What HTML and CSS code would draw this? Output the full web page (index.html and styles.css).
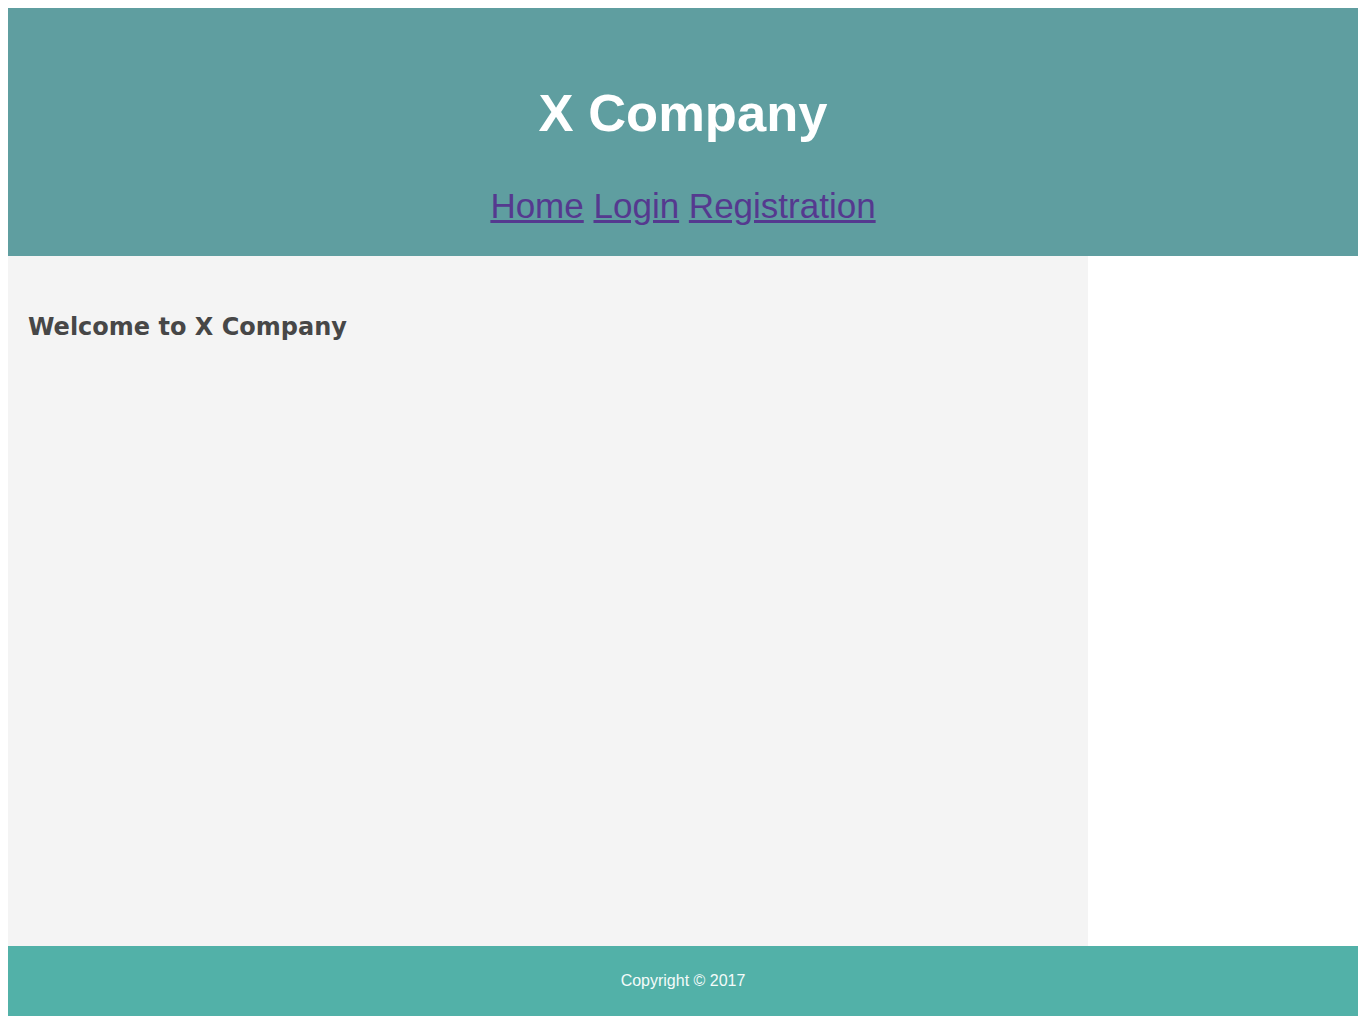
FILE: index.html
```html
<!DOCTYPE html>
<html lang="en">
<head>
<meta charset="utf-8">
<title>X Company</title>
<link rel="stylesheet" href="styles.css">
</head>
<body>
<header class="site-header">
  <h1 class="site-title">X Company</h1>
  <nav class="site-nav">
    <a href="#">Home</a> <a href="#">Login</a> <a href="#">Registration</a>
  </nav>
</header>
<div class="page">
  <main class="content">
    <h2 class="welcome">Welcome to X Company</h2>
  </main>
  <aside class="sidebar"></aside>
</div>
<footer class="site-footer">Copyright &copy; 2017</footer>
</body>
</html>
```

FILE: styles.css
```css
html, body {
  background: #ffffff;
}
body {
  margin: 8px;
  font-family: "Liberation Sans", Arial, sans-serif;
}
.site-header {
  background: #5f9ea0;
  padding: 75px 0 30px;
  text-align: center;
}
.site-title {
  margin: 0;
  font-size: 52.5px;
  line-height: 60px;
  font-weight: bold;
  color: #ffffff;
}
.site-nav {
  margin-top: 43px;
  font-size: 35px;
  line-height: 40px;
}
.site-nav a {
  color: #55398f;
  text-decoration: underline;
}
.page {
  display: flex;
  height: 690px;
}
.content {
  width: 80%;
  background: #f4f4f4;
  padding: 0 20px;
  box-sizing: border-box;
}
.sidebar {
  flex: 1;
  background: #ffffff;
}
.welcome {
  margin: 56px 0 0;
  font-family: "Comic Sans MS", "DejaVu Sans", sans-serif;
  font-size: 24px;
  line-height: 30px;
  font-weight: bold;
  color: #474747;
}
.site-footer {
  background: #52b1a8;
  height: 70px;
  display: flex;
  align-items: center;
  justify-content: center;
  color: #f4fbfa;
  font-size: 16px;
  line-height: 18px;
}
```
